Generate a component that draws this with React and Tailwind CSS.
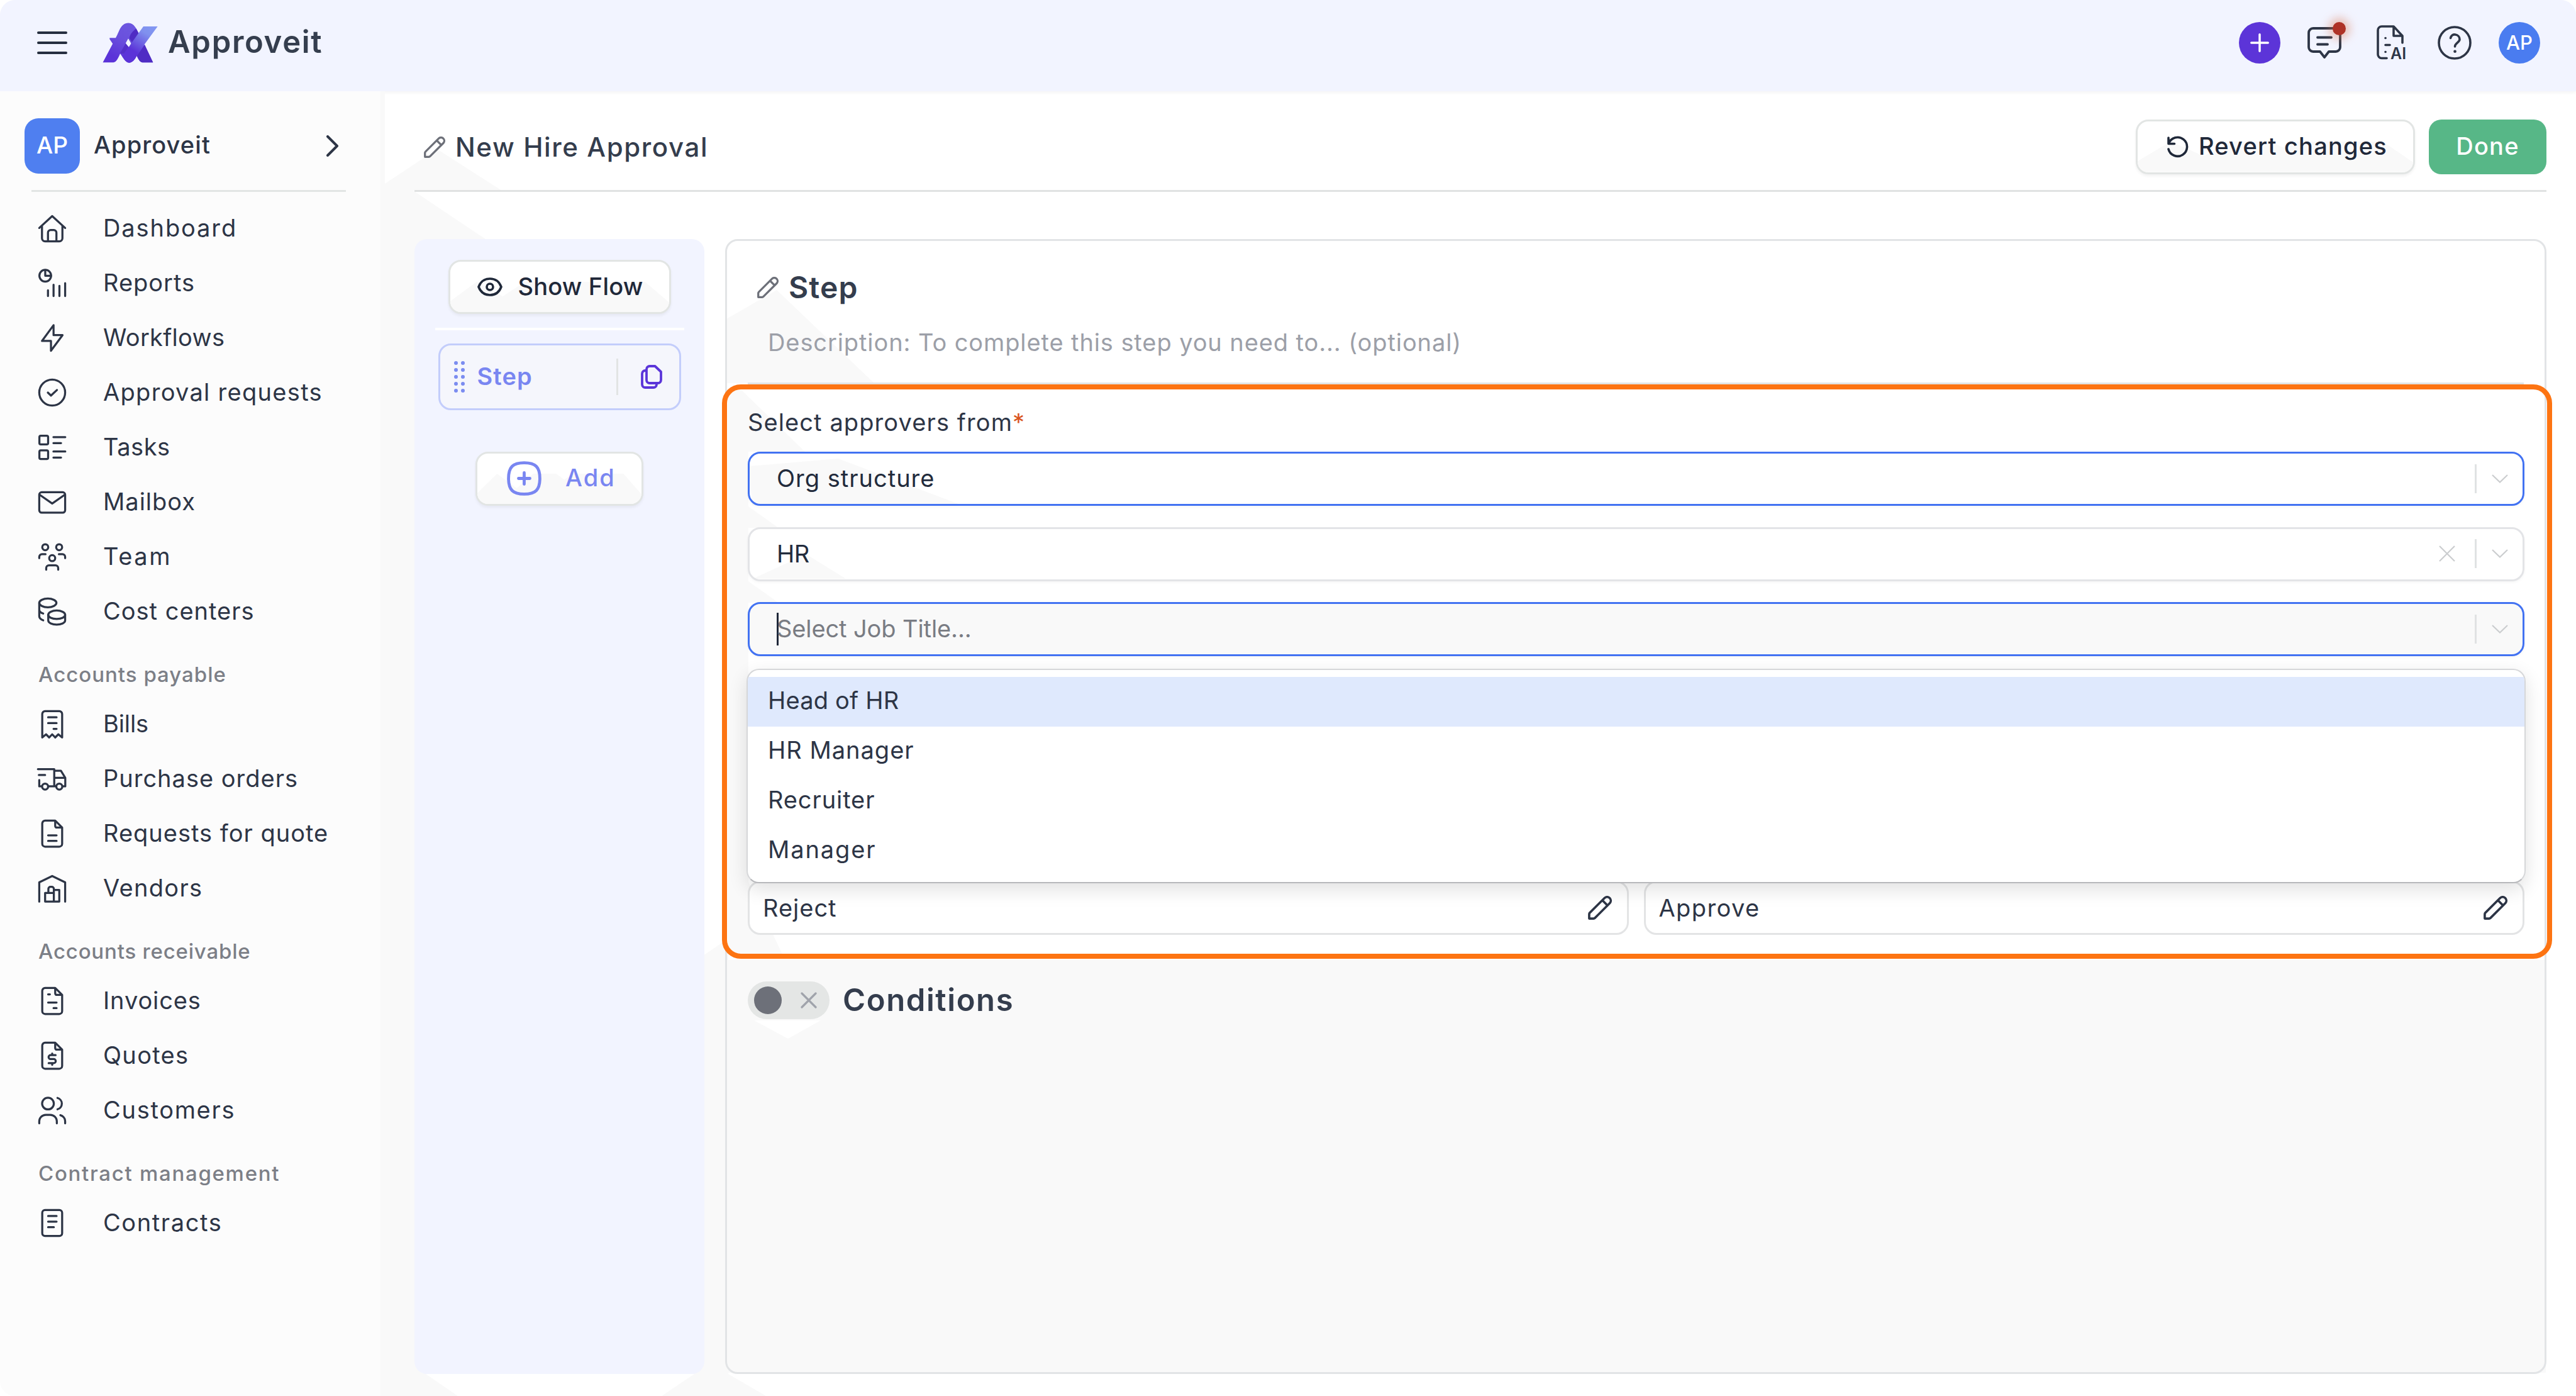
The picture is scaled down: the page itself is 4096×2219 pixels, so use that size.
import React from 'react';

// Outline icons, all on a 24px grid
const Glyph = ({ className = 'size-[52px]', sw = 1.5, children }) => (
  <svg
    viewBox="0 0 24 24"
    fill="none"
    stroke="currentColor"
    strokeWidth={sw}
    strokeLinecap="round"
    strokeLinejoin="round"
    className={`shrink-0 ${className}`}
  >
    {children}
  </svg>
);

const HomeIcon = () => (
  <Glyph>
    <path d="M2.5 11.7 12 3l9.5 8.7M4.5 10.2v9.1a2.2 2.2 0 0 0 2.2 2.2h10.6a2.2 2.2 0 0 0 2.2-2.2v-9.1" />
    <path d="M8.9 21.3v-6.2a1.9 1.9 0 0 1 1.9-1.9h2.4a1.9 1.9 0 0 1 1.9 1.9v6.2" />
  </Glyph>
);
const ReportsIcon = () => (
  <Glyph>
    <circle cx="6.9" cy="6.6" r="4.3" />
    <path d="M6.9 2.5v4.1h4.2M8.9 17.3v4.2M13 13.2v8.3M17.3 14v7.5M21.5 12v9.5" />
  </Glyph>
);
const BoltIcon = () => (
  <Glyph>
    <path d="M13 2.7V10h6.6L11.1 21.5v-7.2H4.5z" />
  </Glyph>
);
const CheckCircleIcon = () => (
  <Glyph>
    <circle cx="12" cy="12" r="9.5" />
    <path d="m8.8 12 2.3 2.2 4.4-4.1" />
  </Glyph>
);
const TasksIcon = () => (
  <Glyph>
    <rect x="2.6" y="3.5" width="6.4" height="6.4" rx="1" />
    <rect x="2.6" y="14.2" width="6.4" height="6.4" rx="1" />
    <path d="M12.9 4.5h8.7M12.9 8.9h5.6M12.9 15.1h8.7M12.9 19.5h5.6" />
  </Glyph>
);
const MailIcon = () => (
  <Glyph>
    <rect x="2.5" y="4.8" width="19" height="15" rx="1.8" />
    <path d="m3 6.8 9 6.3 9-6.3" />
  </Glyph>
);
const TeamIcon = () => (
  <Glyph>
    <circle cx="6.9" cy="5" r="2.2" />
    <circle cx="17.1" cy="5" r="2.2" />
    <circle cx="12" cy="13" r="2.2" />
    <path d="M2.5 13v-.9a2 2 0 0 1 2-2h2.6M21.5 13v-.9a2 2 0 0 0-2-2h-2.6M7.6 21.5v-1.2a2 2 0 0 1 2-2h4.8a2 2 0 0 1 2 2v1.2" />
  </Glyph>
);
const CoinsIcon = () => (
  <Glyph>
    <ellipse cx="8.8" cy="5.7" rx="6.3" ry="3.2" />
    <path d="M2.5 5.7v9.8c0 1.3 1.1 2.3 2.9 3M2.5 10.7c0 1.2 1.1 2.2 2.9 2.8" />
    <ellipse cx="15.3" cy="14.4" rx="6.2" ry="3.1" />
    <path d="M9.1 14.4v4.2c0 1.7 2.8 3 6.2 3s6.2-1.3 6.2-3v-4.2" />
  </Glyph>
);
const BillIcon = () => (
  <Glyph>
    <path d="M4.7 21.8V4.6a2.1 2.1 0 0 1 2.1-2.1h10.4a2.1 2.1 0 0 1 2.1 2.1v17.2l-2.8-2.3-2.3 2.3-2.2-2.3-2.2 2.3-2.3-2.3z" />
    <path d="M9 7h6.2M9 11.3h6.2M13 15.5h2.2" />
  </Glyph>
);
const TruckIcon = () => (
  <Glyph>
    <path d="M1.5 4.9h12v12.6M13.5 6.1h4.9l3.2 5.1v6.3h-1.9M13.5 11.2h8.1M2.2 9.2h4.6M2.5 12.9v4.6h1.8M9.2 17.5h5.5" />
    <circle cx="6.8" cy="17.7" r="2.2" />
    <circle cx="17.2" cy="17.7" r="2.2" />
  </Glyph>
);
const FileShape = () => (
  <path d="M14.2 2.5H6.8a2.1 2.1 0 0 0-2.1 2.1v14.9a2.1 2.1 0 0 0 2.1 2.1h10.4a2.1 2.1 0 0 0 2.1-2.1V7.6zM14.2 2.5v4a1.1 1.1 0 0 0 1.1 1.1h4" />
);
const FileIcon = () => (
  <Glyph>
    <FileShape />
    <path d="M9 13.3h6.2M9 17.4h6.2" />
  </Glyph>
);
const VendorIcon = () => (
  <Glyph>
    <path d="M2.5 21.8V7.6L12 3l9.5 4.6v14.2" />
    <path d="M6.8 15.4h6.4v6.3H6.8zM13.2 13.2h4v8.5h-4zM9.2 15.4v-3a1.5 1.5 0 0 1 1.5-1.5h1a1.5 1.5 0 0 1 1.5 1.5v3" />
  </Glyph>
);
const InvoiceIcon = () => (
  <Glyph>
    <FileShape />
    <path d="M9 7.2h1.3M9 13.2h6.2M13 17.3h2.2" />
  </Glyph>
);
const QuoteIcon = () => (
  <Glyph>
    <FileShape />
    <path d="M14.5 11.6h-3.7a1.4 1.4 0 0 0 0 2.9h2.3a1.5 1.5 0 0 1 0 3H9.4M12 10.4v1.2M12 17.5v1.2" />
  </Glyph>
);
const CustomersIcon = () => (
  <Glyph>
    <circle cx="8.9" cy="7" r="4.3" />
    <path d="M2.5 21.5v-1.4A4.8 4.8 0 0 1 7.3 15.3h3.3a4.8 4.8 0 0 1 4.8 4.8v1.4M15.9 2.9a4.3 4.3 0 0 1 0 8.3M18 15.5a4.8 4.8 0 0 1 3.5 4.6v1.4" />
  </Glyph>
);
const ContractIcon = () => (
  <Glyph>
    <rect x="4.7" y="2.5" width="14.6" height="19" rx="2" />
    <path d="M9 6.9h6.2M9 11h6.2M9 15.1h4.2" />
  </Glyph>
);

const PencilIcon = ({ className, sw }) => (
  <Glyph className={className} sw={sw}>
    <path d="M1.2 22.8v-4.4a2 2 0 0 1 .6-1.4L16.6 2.2a3.6 3.6 0 0 1 5.2 5.2L7 22.2a2 2 0 0 1-1.4.6zM14.4 4.4l5.2 5.2" />
  </Glyph>
);

const Logo = () => (
  <svg viewBox="65 50 505 366" className="h-[64px] w-[88px] shrink-0">
    <defs>
      <linearGradient id="bar" x1="520" y1="90" x2="330" y2="400" gradientUnits="userSpaceOnUse">
        <stop offset="0" stopColor="#8296f2" />
        <stop offset="0.22" stopColor="#8090ee" />
        <stop offset="0.75" stopColor="#5b33d8" />
      </linearGradient>
      <linearGradient id="arch" x1="310" y1="60" x2="150" y2="350" gradientUnits="userSpaceOnUse">
        <stop offset="0" stopColor="#6d57e0" />
        <stop offset="0.45" stopColor="#6a50dd" />
        <stop offset="1" stopColor="#5b33d8" />
      </linearGradient>
    </defs>
    <path
      fill="url(#arch)"
      fillRule="evenodd"
      d="M68 412 158 242 130 200v-12h55C215 145 225 52 302 52c52 0 74 58 95 96L526 412h-98c-23-2-38-35-50-60-18 33-40 63-70 63s-58-50-82-83c-16 38-36 80-61 80ZM300 195l25 45-20 32-28-34Z"
    />
    <path fill="#4f2cc4" d="m372 104 24 46-58 86-28-46c6-36 30-62 62-86ZM450 250l76 162h-98c-23-2-38-35-50-60Z" />
    <path fill="#532fc9" d="m277 238 28 34-42 60h-30l-7-4Z" />
    <path fill="url(#bar)" d="M438 84h130L450 245l-72 107c-18 33-40 63-70 63-24 0-50-30-64-62Z" />
    <path fill="#f2f4ff" d="m300 195 25 45-20 32-28-34Z" />
  </svg>
);

const ChatIcon = () => (
  <svg viewBox="0 0 54 52" fill="none" stroke="currentColor" strokeWidth="3.8" strokeLinecap="round" strokeLinejoin="round" className="h-[52px] w-[54px]">
    <path d="M9 2h36a7 7 0 0 1 7 7v23a7 7 0 0 1-7 7H34l-7 9-7-9H9a7 7 0 0 1-7-7V9a7 7 0 0 1 7-7Z" />
    <path d="M16 16.5h22M16 27.5h16" />
  </svg>
);

const FileAiIcon = () => (
  <svg viewBox="0 0 50 64" fill="none" stroke="currentColor" strokeWidth="3.6" strokeLinecap="round" strokeLinejoin="round" className="h-[64px] w-[50px]">
    <path d="M16 52.5H8a6 6 0 0 1-6-6V8a6 6 0 0 1 6-6h19l14 15v11M27 2v15h14M14 20.5h.1M14 31.5h7M14 42.5h.1" />
    <text x="22" y="54" fill="currentColor" stroke="none" className="font-['Inter'] text-[25px] font-semibold">AI</text>
  </svg>
);

const NAV = [
  {
    items: [
      { label: 'Dashboard', icon: HomeIcon, tracking: 'tracking-[1.9px]' },
      { label: 'Reports', icon: ReportsIcon, tracking: 'tracking-[1px]' },
      { label: 'Workflows', icon: BoltIcon, tracking: 'tracking-[0.3px]' },
      { label: 'Approval requests', icon: CheckCircleIcon, tracking: 'tracking-[1.3px]' },
      { label: 'Tasks', icon: TasksIcon, tracking: 'tracking-[0.5px]' },
      { label: 'Mailbox', icon: MailIcon, tracking: 'tracking-[1px]' },
      { label: 'Team', icon: TeamIcon, tracking: 'tracking-[2.6px]' },
      { label: 'Cost centers', icon: CoinsIcon, tracking: 'tracking-[1px]' },
    ],
  },
  {
    title: 'Accounts payable',
    tracking: 'tracking-[1px]',
    items: [
      { label: 'Bills', icon: BillIcon, tracking: 'tracking-[-0.1px]' },
      { label: 'Purchase orders', icon: TruckIcon, tracking: 'tracking-[1px]' },
      { label: 'Requests for quote', icon: FileIcon, tracking: 'tracking-[1px]' },
      { label: 'Vendors', icon: VendorIcon, tracking: 'tracking-[1.3px]' },
    ],
  },
  {
    title: 'Accounts receivable',
    tracking: 'tracking-[0.8px]',
    items: [
      { label: 'Invoices', icon: InvoiceIcon, tracking: 'tracking-[0.9px]' },
      { label: 'Quotes', icon: QuoteIcon, tracking: 'tracking-[1.3px]' },
      { label: 'Customers', icon: CustomersIcon, tracking: 'tracking-[1.7px]' },
    ],
  },
  {
    title: 'Contract management',
    tracking: 'tracking-[1.7px]',
    items: [{ label: 'Contracts', icon: ContractIcon, tracking: 'tracking-[1.6px]' }],
  },
];

const JOB_TITLES = [
  { label: 'Head of HR', tracking: 'tracking-[0.2px]' },
  { label: 'HR Manager', tracking: 'tracking-[1px]' },
  { label: 'Recruiter', tracking: 'tracking-[0.9px]' },
  { label: 'Manager', tracking: 'tracking-[1.9px]' },
];

// Pale facets behind the workspace
const Backdrop = () => (
  <svg viewBox="0 0 4096 2219" fill="#f9f9f9" className="pointer-events-none absolute inset-0 h-full w-full">
    <path d="M612 292 695 237l103 66H612ZM612 303h45l115 77v1750H612ZM612 2120h120v99H612Z" />
    <path d="M1118 1519l31-21h9v686l60 35h-165l45-35Z" />
    <path d="M1155 507l80-46 155 148H1155ZM1157 620h22l101 98h-123ZM1157 718h33v87l45 32v2h-45v85l45 32v2h-45v444l54 115h-87Z" />
    <path d="M1191 741l142-12 196 74H1196ZM1197 920l85-39 63 39Z" />
    <path d="M1155 1526h2893v656H1155Z" />
    <path fill="#fff" d="M677 2184h427l-52 35H728ZM1166 2184h52v35ZM1199 1622h106l-52 29Z" />
  </svg>
);

const Facet = () => (
  <svg viewBox="0 0 100 50" preserveAspectRatio="none" fill="#f9f9f9" className="absolute inset-x-0 bottom-0 h-[60%] w-full">
    <path d="M0 50V32L12 0l12 24L34 0h14l5 10L58 0h31l11 34v16Z" />
  </svg>
);

const Header = () => (
  <header className="relative flex h-[145px] items-center bg-[#f2f4ff] pr-[57px] pb-[9px] pl-[59px] shadow-[0_2px_6px_rgba(0,0,0,0.05)]">
    <button className="flex w-[48px] flex-col gap-[12px]">
      <span className="h-[4px] rounded-full bg-[#262e3f]" />
      <span className="h-[4px] rounded-full bg-[#262e3f]" />
      <span className="h-[4px] rounded-full bg-[#262e3f]" />
    </button>
    <div className="ml-[56px] flex items-center">
      <Logo />
      <span className="ml-[16px] pb-[2px] text-[49px] font-semibold tracking-[1.7px] text-[#353e4e]">Approveit</span>
    </div>
    <div className="ml-auto flex items-center text-[#2d3546]">
      <button className="flex size-[66px] items-center justify-center rounded-full bg-[#5c34d8] text-white">
        <svg viewBox="0 0 30 30" stroke="currentColor" strokeWidth="3.5" strokeLinecap="round" className="size-[30px]">
          <path d="M15 1.8v26.4M1.8 15h26.4" />
        </svg>
      </button>
      <button className="relative mt-[2px] ml-[43px]">
        <ChatIcon />
        <span className="absolute -top-[8px] right-[-7px] size-[21px] rounded-full bg-[#ae3226] shadow-[0_0_14px_7px_rgba(220,120,80,0.4)]" />
      </button>
      <button className="mt-[8px] ml-[56px]"><FileAiIcon /></button>
      <button className="ml-[47px]">
        <svg viewBox="0 0 54 54" fill="none" stroke="currentColor" strokeWidth="3.6" strokeLinecap="round" strokeLinejoin="round" className="size-[54px]">
          <circle cx="27" cy="27" r="25" />
          <path d="M20.5 19.5c1-4 4-6 7.5-5.5 4 .5 7 3.5 7 7.5 0 5-7.5 6-7.5 11.5" />
          <path d="M27.5 40.7h.1" strokeWidth="4.6" />
        </svg>
      </button>
      <div className="ml-[43px] flex size-[66px] items-center justify-center rounded-full bg-[#4a7cf0] text-[31px] font-medium text-white">AP</div>
    </div>
  </header>
);

const Sidebar = () => (
  <aside className="w-[612px] shrink-0 border-r-[7px] border-[#f9f9f9] bg-[#fcfcfc]">
    <div className="ml-[39px] flex h-[172px] items-center pt-[1px]">
      <div className="flex size-[88px] items-center justify-center rounded-[22px] bg-[#4f7ff0] pb-[2px] text-[37px] font-medium text-white">AP</div>
      <span className="ml-[22px] pb-[3px] text-[38px] font-medium tracking-[1.1px] text-[#2d3546]">Approveit</span>
      <svg viewBox="0 0 20 34" fill="none" stroke="#2d3546" strokeWidth="4" strokeLinecap="round" strokeLinejoin="round" className="mr-[66px] ml-auto h-[34px] w-[20px]">
        <path d="m2 2 15 15L2 32" />
      </svg>
    </div>
    <div className="-mt-[15px] ml-[50px] h-[3px] w-[500px] bg-[#e2e5e4]" />
    <nav className="mt-[14px]">
      {NAV.map((group, i) => (
        <div key={i}>
          {group.title && (
            <div className={`flex h-[92px] items-center pt-[24px] pl-[61px] text-[33px] font-medium text-[#7c7f87] ${group.tracking}`}>{group.title}</div>
          )}
          {group.items.map(({ label, icon: Icon, tracking }) => (
            <a key={label} className={`flex h-[87px] items-center gap-[55px] pl-[57px] text-[38px] text-[#2d3546] ${tracking}`}>
              <Icon />
              {label}
            </a>
          ))}
        </div>
      ))}
    </nav>
  </aside>
);

const StepsPanel = () => (
  <section className="flex w-[461px] shrink-0 flex-col items-center rounded-[20px] bg-[#f2f4ff] pt-[33px]">
    <button className="relative flex h-[86px] w-[354px] items-center overflow-hidden rounded-[20px] border-[3px] border-[#e2e5e4] bg-white pl-[43px] shadow-[0_3px_4px_rgba(0,0,0,0.05)]">
      <Facet />
      <svg viewBox="0 0 40 30" fill="none" stroke="#1f2839" strokeWidth="3.6" className="relative h-[30px] w-[40px]">
        <path d="M2 15C5 7 11.5 2 20 2s15 5 18 13c-3 8-9.5 13-18 13S5 23 2 15Z" />
        <circle cx="20" cy="15" r="5" />
      </svg>
      <span className="relative ml-[25px] pb-[1px] text-[38px] font-medium tracking-[0.2px] text-[#1f2839]">Show Flow</span>
    </button>
    <div className="mt-[22px] h-[4px] w-[396px] bg-white" />
    <div className="mt-[21px] flex h-[106px] w-[386px] items-center rounded-[20px] border-[3px] border-[#c3cdfb] bg-[#f5f6fc]">
      <div className="ml-[22px] grid grid-cols-2 gap-x-[5px] gap-y-[5px]">
        {Array.from({ length: 10 }, (_, i) => (
          <span key={i} className="size-[6px] rounded-full bg-[#7b8cf0]" />
        ))}
      </div>
      <span className="ml-[20px] pb-[2px] text-[38px] font-semibold tracking-[1.1px] text-[#7986f1]">Step</span>
      <div className="mr-[36px] ml-auto h-[58px] w-[3px] bg-[#e2e4e4]" />
      <svg viewBox="0 0 34 38" fill="none" stroke="#5b35d9" strokeWidth="3.8" strokeLinejoin="round" className="mr-[27px] h-[38px] w-[34px]">
        <path d="M14 2h8.5L32 11v13a5 5 0 0 1-5 5H14a5 5 0 0 1-5-5V7a5 5 0 0 1 5-5Z" />
        <path d="M9 9H7a5 5 0 0 0-5 5v17a5 5 0 0 0 5 5h13a5 5 0 0 0 5-5v-2" />
      </svg>
    </div>
    <button className="relative mt-[66px] flex h-[86px] w-[267px] items-center overflow-hidden rounded-[20px] border-[3px] border-[#e2e5e4] bg-white pb-[1px] pl-[47px] text-[#7986f1] shadow-[0_3px_4px_rgba(0,0,0,0.05)]">
      <Facet />
      <svg viewBox="0 0 55 55" fill="none" stroke="currentColor" strokeWidth="4.8" strokeLinecap="round" className="relative size-[55px]">
        <path d="M27.5 2.6c18 0 24.9 6.9 24.9 24.9s-6.9 24.9-24.9 24.9S2.6 45.5 2.6 27.5 9.5 2.6 27.5 2.6ZM27.5 18.5v18M18.5 27.5h18" />
      </svg>
      <span className="relative ml-[38px] pb-[2px] text-[38px] font-medium tracking-[2px]">Add</span>
    </button>
  </section>
);

const Select = ({ tone, clearable, children }) => (
  <div className={`flex h-[86px] items-center rounded-[20px] border-[3px] pb-[1px] pl-[43px] text-[38px] shadow-[0_2px_4px_rgba(0,0,0,0.04)] ${tone}`}>
    {children}
    <div className="ml-auto flex items-center text-[#cbcdcf]">
      {clearable && (
        <svg viewBox="0 0 26 26" stroke="currentColor" strokeWidth="2.2" className="mr-[31px] size-[26px]">
          <path d="m1 1 24 24M25 1 1 25" />
        </svg>
      )}
      <span className="h-[46px] w-[3px] bg-[#e0e2e3]" />
      <svg viewBox="0 0 26 14" fill="none" stroke="currentColor" strokeWidth="2.2" className="mr-[23px] ml-[24px] h-[14px] w-[26px]">
        <path d="m1 1 12 11.5L25 1" />
      </svg>
    </div>
  </div>
);

const ActionField = ({ label, tracking }) => (
  <div className={`flex h-[86px] flex-1 items-center justify-between rounded-[20px] border-[3px] border-[#e3e4e5] bg-white pr-[24px] pl-[21px] text-[38px] ${tracking}`}>
    {label}
    <PencilIcon className="size-[38px]" sw={2.3} />
  </div>
);

const StepEditor = () => (
  <section className="min-w-0 flex-1 rounded-[20px] border-[3px] border-[#e2e4e6] text-[#2d3546]">
    <div className="flex h-[148px] items-center pl-[48px]">
      <PencilIcon className="size-[34px] text-[#6d7079]" sw={2.3} />
      <h2 className="ml-[16px] pb-[1px] text-[48px] font-semibold tracking-[1.1px] text-[#343d4d]">Step</h2>
    </div>
    <p className="flex h-[26px] items-center pl-[65px] text-[38px] tracking-[0.9px] whitespace-nowrap text-[#9c9fa8]">
      Description: To complete this step you need to... (optional)
    </p>
    <div className="mx-[33px] mt-[51px] h-[3px] bg-[#e2e4e4]" />

    {/* Approver picker */}
    <div className="relative -mr-[12px] -ml-[8px] rounded-[30px] border-[8px] border-[#fd7412] pr-[36px] pb-[30px] pl-[33px]">
      <label className="flex h-[99px] items-center pt-[5px] text-[38px] tracking-[1.1px]">
        Select approvers from<span className="text-[#d9541e]">*</span>
      </label>
      <div className="flex flex-col gap-[33.5px]">
        <Select tone="border-[#4272f2] text-[#222b3c] tracking-[1px]">Org structure</Select>
        <Select tone="border-[#e3e4e7] text-[#222b3c] tracking-[-0.5px]" clearable>HR</Select>
        <div className="relative">
          <Select tone="border-[#4272f2] bg-[#f9f9f9] text-[#797c83] tracking-[-0.1px]">
            <span className="-mr-[3px] h-[52px] w-[3px] bg-[#1f2839]" />
            Select Job Title...
          </Select>
          <ul className="absolute top-[106px] right-[-2px] left-[-2px] z-10 h-[341px] overflow-hidden rounded-[20px] border-[2px] border-[#d6d7d9] border-b-[#b7b8bb] bg-white pt-[11px] text-[38px] shadow-[0_10px_30px_rgba(0,0,0,0.12)]">
            {JOB_TITLES.map(({ label, tracking }, i) => (
              <li key={label} className={`flex h-[79px] items-center pb-[4px] pl-[32px] ${tracking} ${i === 0 ? 'bg-[#dfe9fd]' : ''}`}>
                {label}
              </li>
            ))}
          </ul>
        </div>
      </div>
      <div className="mt-[357px] flex gap-[24px]">
        <ActionField label="Reject" tracking="tracking-[1px]" />
        <ActionField label="Approve" tracking="tracking-[1.4px]" />
      </div>
    </div>

    <div className="mt-[31px] ml-[33px] flex items-center">
      <div className="flex h-[60px] w-[130px] items-center rounded-full bg-[#e4e6e5] pl-[10px]">
        <span className="size-[44px] rounded-full bg-[#6d7079]" />
        <svg viewBox="0 0 26 26" stroke="#a0a3ab" strokeWidth="3.2" strokeLinecap="round" className="ml-[30px] size-[26px]">
          <path d="m2 2 22 22M24 2 2 24" />
        </svg>
      </div>
      <h3 className="ml-[21px] text-[49px] leading-[70px] font-semibold tracking-[1.6px] text-[#343d4d]">Conditions</h3>
    </div>
  </section>
);

const App = () => (
  <div className="relative flex h-[2219px] w-[4096px] flex-col overflow-hidden rounded-[24px] bg-white font-['Inter',sans-serif]">
    <Backdrop />
    <Header />
    <div className="relative flex flex-1">
      <Sidebar />
      <main className="flex min-w-0 flex-1 flex-col pr-[47px] pl-[47px]">
        <div className="flex h-[157px] items-start justify-between pt-[45px]">
          <div className="flex h-[88px] items-center pl-[15px]">
            <PencilIcon className="size-[34px] text-[#6d7079]" sw={2.3} />
            <h1 className="ml-[16px] pb-[2px] text-[42px] font-medium tracking-[1.6px] text-[#343d4d]">New Hire Approval</h1>
          </div>
          <div className="flex gap-[22px]">
            <button className="relative flex h-[87px] w-[444px] items-center overflow-hidden rounded-[20px] border-[3px] border-[#e2e5e4] bg-white pl-[46px] shadow-[0_3px_4px_rgba(0,0,0,0.05)]">
              <Facet />
              <svg viewBox="0 0 36 36" fill="none" stroke="#1f2839" strokeWidth="3.6" strokeLinecap="round" strokeLinejoin="round" className="relative size-[36px]">
                <path d="M3 3v9.5h9.5M3.5 12A15 15 0 1 1 3 21" />
              </svg>
              <span className="relative ml-[15px] pb-[2px] text-[38px] font-medium tracking-[1.2px] text-[#1f2839]">Revert changes</span>
            </button>
            <button className="h-[87px] w-[187px] rounded-[20px] bg-[#57b787] pb-[2px] text-[38px] font-medium tracking-[1.2px] text-white">Done</button>
          </div>
        </div>
        <div className="h-[3px] bg-[#e0e2e2]" />
        <div className="mt-[75px] flex h-[1804px] gap-[33px]">
          <StepsPanel />
          <StepEditor />
        </div>
      </main>
    </div>
  </div>
);

export default App;
